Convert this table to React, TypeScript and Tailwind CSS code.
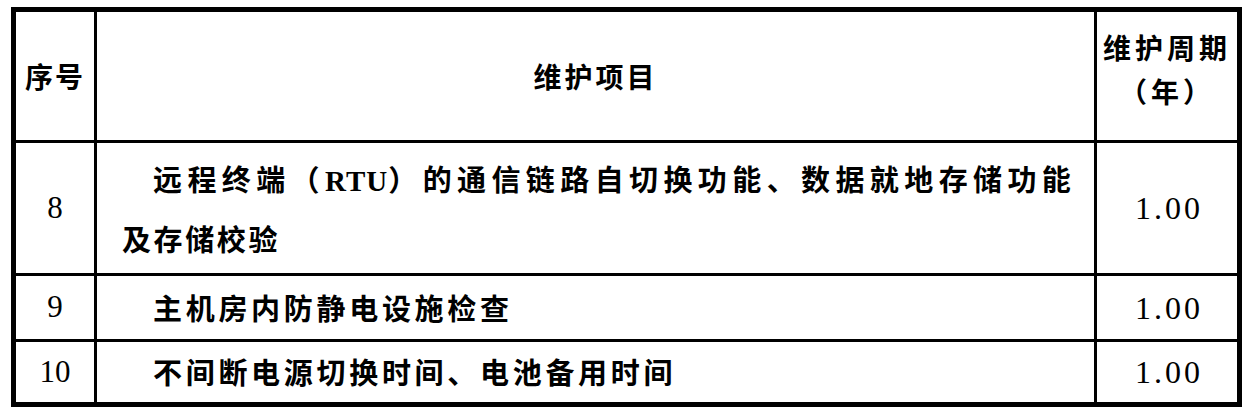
const CJK = "font-['Noto_Sans_CJK_SC',sans-serif]"
const SERIF = "font-['Liberation_Serif','Times_New_Roman',serif]"

const cell = 'flex items-center border-black'

export default function App() {
  return (
    <div className="min-h-screen bg-white pl-[11px] pt-[7px] text-black">
      <div className="w-[1231px] border-[5px] border-black">
        <div className="grid grid-cols-[81px_1000px_1fr] grid-rows-[131px_133px_66px_60px]">
          {/* header */}
          <div className={`${cell} justify-center border-r-[3px] border-b-[3px] ${CJK} text-[28px] font-bold tracking-[2px]`}>
            序号
          </div>
          <div className={`${cell} justify-center border-r-[3px] border-b-[3px] ${CJK} text-[28px] font-bold tracking-[3px]`}>
            维护项目
          </div>
          <div className={`${cell} flex-col justify-center border-b-[3px] pb-[14px] ${CJK} text-[28px] font-bold leading-[44px] tracking-[4px]`}>
            <span>维护周期</span>
            <span>（年）</span>
          </div>

          {/* row 8 */}
          <div className={`${cell} justify-center border-r-[3px] border-b-[3px] ${SERIF} text-[31px]`}>8</div>
          <div className={`${cell} border-r-[3px] border-b-[3px] ${CJK} text-[29px] font-bold`}>
            <div className="flex flex-col leading-[57px]">
              <span className="pl-[56px] whitespace-nowrap tracking-[5.4px]">
                远程终端（<span className={`${SERIF} font-bold tracking-[1px]`}>RTU</span>）的通信链路自切换功能、数据就地存储功能
              </span>
              <span className="pl-[25px] tracking-[2.6px]">及存储校验</span>
            </div>
          </div>
          <div className={`${cell} justify-center border-b-[3px] pl-[4px] ${SERIF} text-[32px] tracking-[3px]`}>1.00</div>

          {/* row 9 */}
          <div className={`${cell} justify-center border-r-[3px] border-b-[3px] ${SERIF} text-[31px]`}>9</div>
          <div className={`${cell} border-r-[3px] border-b-[3px] pl-[56px] ${CJK} text-[29px] font-bold tracking-[3.7px]`}>
            主机房内防静电设施检查
          </div>
          <div className={`${cell} justify-center border-b-[3px] pl-[4px] ${SERIF} text-[32px] tracking-[3px]`}>1.00</div>

          {/* row 10 */}
          <div className={`${cell} justify-center border-r-[3px] ${SERIF} text-[31px]`}>10</div>
          <div className={`${cell} border-r-[3px] pl-[56px] ${CJK} text-[29px] font-bold tracking-[3.7px]`}>
            不间断电源切换时间、电池备用时间
          </div>
          <div className={`${cell} justify-center pl-[4px] ${SERIF} text-[32px] tracking-[3px]`}>1.00</div>
        </div>
      </div>
    </div>
  )
}
